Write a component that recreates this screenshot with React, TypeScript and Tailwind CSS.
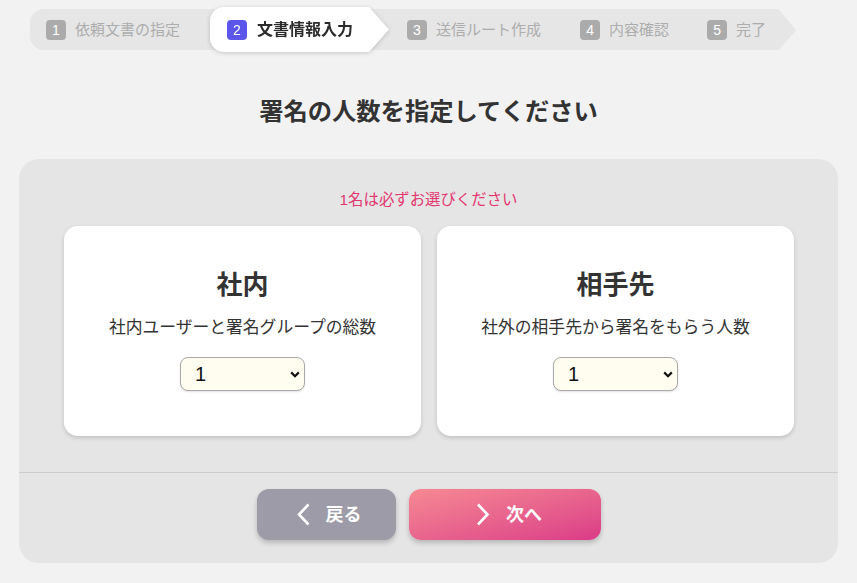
import { useState } from 'react';

/** Etapes de l'assistant */
const STEPS = [
  { no: 1, label: '依頼文書の指定' },
  { no: 2, label: '文書情報入力' },
  { no: 3, label: '送信ルート作成' },
  { no: 4, label: '内容確認' },
  { no: 5, label: '完了' },
];

const FONT = { fontFamily: '"Liberation Sans", "Noto Sans CJK JP", sans-serif' };

function Badge({ no, active }: { no: number; active?: boolean }) {
  return (
    <span
      className={`flex h-[20px] w-[20px] items-center justify-center rounded-[4px] text-[14px] leading-none text-white ${
        active ? 'bg-[#5b55e9]' : 'bg-[#ababab]'
      }`}
    >
      {no}
    </span>
  );
}

function Stepper() {
  return (
    <div className="flex items-center pl-[30px] pt-[9px]">
      <div className="flex h-[41px] items-center rounded-l-[14px] bg-[#e6e6e6] pl-[16px] pr-[13px]">
        {/* etape 1 */}
        <div className="flex items-center gap-[9px]">
          <Badge no={1} />
          <span className="text-[15px] leading-none text-[#adadad]">{STEPS[0].label}</span>
        </div>

        {/* etape active */}
        <div className="ml-[30px] drop-shadow-[0_1px_2px_rgba(0,0,0,0.18)]">
          <div
            className="flex h-[45px] w-[179px] items-center gap-[10px] rounded-l-[14px] bg-white pl-[17px]"
            style={{ clipPath: 'polygon(0 0, calc(100% - 20px) 0, 100% 50%, calc(100% - 20px) 100%, 0 100%)' }}
          >
            <Badge no={2} active />
            <span className="text-[16px] font-bold leading-none text-[#2b2b2b]">{STEPS[1].label}</span>
          </div>
        </div>

        <div className="ml-[18px] flex items-center gap-[9px]">
          <Badge no={3} />
          <span className="text-[15px] leading-none text-[#adadad]">{STEPS[2].label}</span>
        </div>
        <div className="ml-[39px] flex items-center gap-[9px]">
          <Badge no={4} />
          <span className="text-[15px] leading-none text-[#adadad]">{STEPS[3].label}</span>
        </div>
        <div className="ml-[38px] flex items-center gap-[9px]">
          <Badge no={5} />
          <span className="text-[15px] leading-none text-[#adadad]">{STEPS[4].label}</span>
        </div>
      </div>
      {/* pointe de fleche */}
      <div className="h-0 w-0 border-y-[20.5px] border-l-[17px] border-y-transparent border-l-[#e6e6e6]" />
    </div>
  );
}

function CountSelect({ value, onChange }: { value: number; onChange: (v: number) => void }) {
  return (
    <div className="relative h-[34px] w-[125px]">
      <select
        value={value}
        onChange={(e) => onChange(Number(e.target.value))}
        className="h-full w-full appearance-none rounded-[8px] border border-[#aaaaaa] bg-[#fffcf0] pl-[14px] text-[20px] leading-none text-[#111] shadow-[0_1px_2px_rgba(0,0,0,0.12)] outline-none"
        style={FONT}
      >
        {Array.from({ length: 10 }, (_, i) => i).map((n) => (
          <option key={n} value={n}>
            {n}
          </option>
        ))}
      </select>
      <svg
        className="pointer-events-none absolute right-[5px] top-[14px]"
        width="10"
        height="7"
        viewBox="0 0 10 7"
      >
        <path d="M1.2 1.4 L5 5.2 L8.8 1.4" fill="none" stroke="#111" strokeWidth="2.2" />
      </svg>
    </div>
  );
}

function Card({ title, desc, value, onChange }: { title: string; desc: string; value: number; onChange: (v: number) => void }) {
  return (
    <div className="flex flex-1 flex-col items-center rounded-[14px] bg-white pb-[45px] pt-[44px] shadow-[0_2px_4px_rgba(0,0,0,0.16)]">
      <h2 className="text-[26px] font-bold leading-[30px] text-[#333]">{title}</h2>
      <p className="mt-[16px] text-[16.8px] leading-[24px] text-[#333]">{desc}</p>
      <div className="mt-[17px]">
        <CountSelect value={value} onChange={onChange} />
      </div>
    </div>
  );
}

export default function App() {
  const [internal, setInternal] = useState(1);
  const [external, setExternal] = useState(1);

  return (
    <div className="h-[583px] w-[857px] overflow-hidden bg-[#f2f2f2]" style={FONT}>
      <Stepper />

      <h1 className="mt-[47px] text-center text-[24.3px] font-bold leading-[30px] text-[#333]">
        署名の人数を指定してください
      </h1>

      <section className="mx-[19px] mt-[32px] rounded-[20px] bg-[#e5e5e5]">
        <div className="px-[44px] pt-[31px]">
          <p className="text-center text-[15.4px] leading-[20px] text-[#e2366f]">1名は必ずお選びください</p>
          <div className="mt-[16px] flex gap-[16px] pl-[1px]">
            <Card title="社内" desc="社内ユーザーと署名グループの総数" value={internal} onChange={setInternal} />
            <Card title="相手先" desc="社外の相手先から署名をもらう人数" value={external} onChange={setExternal} />
          </div>
        </div>

        <div className="mt-[36px] border-t border-[#cccccc]" />

        <div className="flex justify-center gap-[13px] pb-[23px] pt-[16px]">
          <button className="flex h-[51px] w-[139px] items-center justify-center gap-[15px] rounded-[12px] bg-[#9c9ba7] pl-[5px] shadow-[0_3px_5px_rgba(0,0,0,0.2)]">
            <svg width="15" height="23" viewBox="0 0 15 23">
              <path d="M12.5 1.5 L3 11.5 L12.5 21.5" fill="none" stroke="#fff" strokeWidth="2.6" />
            </svg>
            <span className="text-[18px] font-bold leading-none text-white">戻る</span>
          </button>
          <button className="flex h-[51px] w-[192px] items-center justify-center gap-[16px] rounded-[12px] bg-linear-to-br from-[#f68993] to-[#da3a87] pl-[9px] shadow-[0_3px_5px_rgba(0,0,0,0.2)]">
            <svg width="14" height="23" viewBox="0 0 14 23">
              <path d="M2 1.5 L11.5 11.5 L2 21.5" fill="none" stroke="#fff" strokeWidth="2.6" />
            </svg>
            <span className="text-[18px] font-bold leading-none text-white">次へ</span>
          </button>
        </div>
      </section>
    </div>
  );
}
